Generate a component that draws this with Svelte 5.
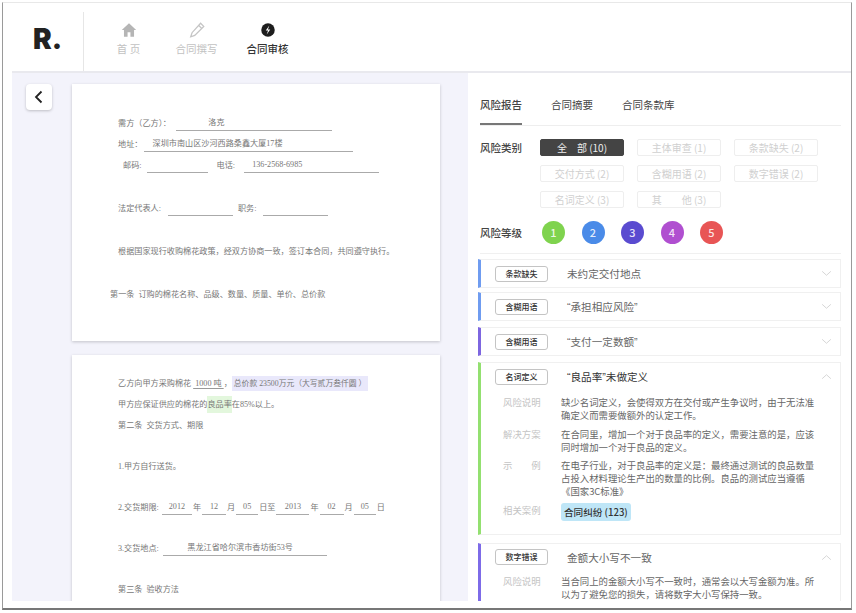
<script lang="ts">
  const nav = [
    { label: '首 页', icon: 'home' },
    { label: '合同撰写', icon: 'pen' },
    { label: '合同审核', icon: 'review', active: true }
  ];
  const chips = ['全　部 (10)', '主体审查 (1)', '条款缺失 (2)', '交付方式 (2)', '含糊用语 (2)', '数字错误 (2)', '名词定义 (3)', '其　　他 (3)'];
  const levels = ['#7fd34e', '#4a8be8', '#5a4bd0', '#b04fd0', '#e85555'];
  const collapsed = [
    { tag: '条款缺失', title: '未约定交付地点', color: '#6f9cf0' },
    { tag: '含糊用语', title: '“承担相应风险”', color: '#6f9cf0' },
    { tag: '含糊用语', title: '“支付一定数额”', color: '#7d66e0' }
  ];
</script>

<div class="frame">
  <header>
    <div class="logo">R.</div>
    <nav>
      {#each nav as item}
        <div class="nav-item" class:active={item.active}>
          <svg viewBox="0 0 20 20" width="18" height="18">
            {#if item.icon === 'home'}
              <path d="M10 2.5 2 10h2.4v7.5h4v-5h3.2v5h4V10H18z" fill="#b5b5b5" />
            {:else if item.icon === 'pen'}
              <path d="M14 2.5l3.5 3.5L7.5 16 3 17.5 4.5 13z M12 5l3.5 3.5" fill="none" stroke="#c4c4c4" stroke-width="1.4" />
            {:else}
              <circle cx="10" cy="10" r="7.5" fill="#1d1d1d" />
              <path d="M11.5 5 7.5 10.5h2.6L8.5 15l4-5.5H9.9z" fill="#fff" />
            {/if}
          </svg>
          <span>{item.label}</span>
        </div>
      {/each}
    </nav>
  </header>

  <main>
    <section class="docs">
      <button class="back" aria-label="返回">
        <svg viewBox="0 0 14 14" width="14" height="14"><path d="M9.5 1.5 4 7l5.5 5.5" fill="none" stroke="#222" stroke-width="1.8" /></svg>
      </button>
      <div class="pages">
        <article class="page first">
          <p>需方（乙方）： <u class="fill buyer">　　　　洛克</u></p>
          <p>地址： <u class="fill addr">　深圳市南山区沙河西路桑鑫大厦17楼</u></p>
          <p class="ind">邮码: <u class="fill zip"></u><span class="sp">电话:</span><u class="fill tel">　136-2568-6985</u></p>
          <p class="gap">法定代表人: <u class="fill rep"></u><span class="sp small">职务:</span><u class="fill rep"></u></p>
          <p class="gap">根据国家现行收购棉花政策，经双方协商一致，签订本合同，共同遵守执行。</p>
          <p class="gap out">第一条&nbsp; 订购的棉花名称、品级、数量、质量、单价、总价款</p>
        </article>
        <article class="page second">
          <p>乙方向甲方采购棉花 <u>&nbsp;1000&nbsp;吨&nbsp;</u>，<span class="hl-purple">总价款 23500万元（大写贰万叁仟圆 ）</span></p>
          <p>甲方应保证供应的棉花的<span class="hl-green">良品率</span>在85%以上。</p>
          <p>第二条&nbsp; 交货方式、期限</p>
          <p class="gap">1.甲方自行送货。</p>
          <p class="gap dates">2.交货期限: <u class="fill d30">2012</u>年<u class="fill d25">12</u>月<u class="fill d23">05</u>日至<u class="fill d34">2013</u>年<u class="fill d25">02</u>月<u class="fill d23">05</u>日</p>
          <p class="gap">3.交货地点: <u class="fill place">　　　黑龙江省哈尔滨市香坊街53号</u></p>
          <p class="gap">第三条&nbsp; 验收方法</p>
        </article>
      </div>
    </section>

    <aside class="report">
      <div class="tabs">
        <span class="tab active">风险报告</span>
        <span class="tab">合同摘要</span>
        <span class="tab">合同条款库</span>
      </div>
      <div class="filter">
        <b>风险类别</b>
        <div class="chips">
          {#each chips as chip, i}
            <span class="chip" class:on={i === 0}>{chip}</span>
          {/each}
        </div>
      </div>
      <div class="filter levels">
        <b>风险等级</b>
        <div class="dots">
          {#each levels as color, i}
            <span class="dot" style="background:{color}">{i + 1}</span>
          {/each}
        </div>
      </div>

      <div class="list">
        {#each collapsed as row}
          <div class="card" style="border-left-color:{row.color}">
            <div class="head">
              <span class="tag">{row.tag}</span>
              <span class="title">{row.title}</span>
              <svg class="chev" viewBox="0 0 12 8" width="11" height="7"><path d="M1 1.5 6 6l5-4.5" fill="none" stroke="#d4d4d4" stroke-width="1.1" /></svg>
            </div>
          </div>
        {/each}

        <div class="card open" style="border-left-color:#93e070">
          <div class="head">
            <span class="tag">名词定义</span>
            <span class="title dark">“良品率”未做定义</span>
            <svg class="chev" viewBox="0 0 12 8" width="11" height="7"><path d="M1 6.5 6 2l5 4.5" fill="none" stroke="#d4d4d4" stroke-width="1.1" /></svg>
          </div>
          <dl>
            <dt>风险说明</dt>
            <dd>缺少名词定义，会使得双方在交付或产生争议时，由于无法准<br />确定义而需要做额外的认定工作。</dd>
            <dt>解决方案</dt>
            <dd>在合同里，增加一个对于良品率的定义，需要注意的是，应该<br />同时增加一个对于良品的定义。</dd>
            <dt>示　　例</dt>
            <dd>在电子行业，对于良品率的定义是：最终通过测试的良品数量<br />占投入材料理论生产出的数量的比例。良品的测试应当遵循<br />《国家3C标准》</dd>
            <dt class="case">相关案例</dt>
            <dd class="case"><span class="pill">合同纠纷 (123)</span></dd>
          </dl>
        </div>

        <div class="card open last" style="border-left-color:#7d6be8">
          <div class="head">
            <span class="tag">数字错误</span>
            <span class="title">金额大小写不一致</span>
            <svg class="chev" viewBox="0 0 12 8" width="11" height="7"><path d="M1 6.5 6 2l5 4.5" fill="none" stroke="#d4d4d4" stroke-width="1.1" /></svg>
          </div>
          <dl>
            <dt>风险说明</dt>
            <dd>当合同上的金额大小写不一致时，通常会以大写金额为准。所<br />以为了避免您的损失，请将数字大小写保持一致。</dd>
          </dl>
        </div>
      </div>
    </aside>
  </main>
</div>

<style>
  :global(body) {
    background: #fff;
    font-family: "Noto Sans CJK SC", "Liberation Sans", sans-serif;
  }
  .frame {
    width: 850px;
    height: 608px;
    margin: 2px 0 0 2px;
    box-sizing: border-box;
    border: 1px solid #9a9a9a;
    border-top-color: #e8e8e8;
    border-bottom: 2px solid #777;
    background: #fff;
    display: flex;
    flex-direction: column;
    overflow: hidden;
  }
  header {
    height: 68px;
    flex: none;
    display: flex;
    align-items: stretch;
    margin-left: 9px;
  }
  .logo {
    width: 72px;
    margin-top: 9px;
    padding: 7px 0 0 21px;
    box-sizing: border-box;
    border-right: 1px solid #e6e6e6;
    font: 900 28px/40px "Inter", "Liberation Sans", sans-serif;
    color: #222;
  }
  nav {
    display: flex;
    padding-left: 23px;
    gap: 25px;
  }
  .nav-item {
    width: 43px;
    display: flex;
    flex-direction: column;
    align-items: center;
    padding-top: 18px;
    gap: 2px;
    font-size: 10.5px;
    line-height: 15px;
    color: #c2c2c2;
  }
  .nav-item.active { color: #333; font-weight: 500; margin-left: 3px; }
  main {
    flex: 1;
    min-height: 0;
    margin: 0 0 7px 9px;
    border-top: 2px solid #e9e9ee;
    display: flex;
    overflow: hidden;
  }
  .docs {
    width: 456px;
    flex: none;
    background: #f3f3fb;
    display: flex;
    padding: 11px 0 0 14px;
    box-sizing: border-box;
    gap: 20px;
    overflow: hidden;
  }
  .back {
    width: 26px;
    height: 26px;
    flex: none;
    padding: 0;
    display: flex;
    align-items: center;
    justify-content: center;
    border: none;
    border-radius: 4px;
    background: #fff;
    box-shadow: 0 1px 3px rgba(0, 0, 0, 0.22);
  }
  .pages {
    width: 368px;
    flex: none;
    display: flex;
    flex-direction: column;
    gap: 14px;
  }
  .page {
    background: #fff;
    box-shadow: 0 1px 3px rgba(0, 0, 0, 0.2);
    padding: 0 0 0 46px;
    box-sizing: border-box;
    font-family: "Liberation Serif", "Noto Sans CJK SC", serif;
    font-size: 8.15px;
    color: #777;
    flex: none;
  }
  .page.first { height: 257px; padding-top: 33px; }
  .page.second { height: 280px; padding-top: 22px; }
  .page p { margin: 0 0 7px; line-height: 14px; height: 14px; white-space: nowrap; }
  .page p.gap { margin-top: 27px; }
  .page.first p.gap { margin-top: 29px; }
  .page p.ind { padding-left: 5px; }
  .page p.out { margin-left: -8px; }
  .sp { margin: 0 9px; }
  .sp.small { margin: 0 2px 0 5px; }
  u { text-decoration-color: #999; text-underline-offset: 2px; }
  u.fill {
    display: inline-block;
    vertical-align: bottom;
    height: 13px;
    line-height: 12px;
    border-bottom: 1px solid #aaa;
    text-decoration: none;
  }
  u.buyer { width: 156px; margin-left: 3px; }
  u.addr { width: 209px; margin-left: 0; }
  u.zip { width: 61px; margin-left: 3px; }
  u.tel { width: 135px; }
  u.rep { width: 65px; margin-left: 5px; }
  u.place { width: 164px; margin-left: 2px; }
  .dates u.fill { text-align: center; margin: 0 1px; }
  u.d30 { width: 30px; }
  u.d25 { width: 24px; }
  u.d23 { width: 22px; }
  u.d34 { width: 33px; }
  .hl-purple { background: #e9e8fb; padding: 3px 2px; font-size: 7.8px; }
  .hl-green { background: #e3f7dd; padding: 4px 0; }
  .report {
    flex: 1;
    min-width: 0;
    padding: 0 10px;
    overflow: hidden;
  }
  .tabs {
    margin: 0 0 13px 2px;
    height: 53px;
    display: flex;
    gap: 29px;
    border-bottom: 1px solid #eeeeee;
    font-size: 10.5px;
    color: #444;
    box-sizing: border-box;
  }
  .tab {
    padding-top: 24px;
    height: 26px;
    line-height: 15px;
  }
  .tab.active {
    border-bottom: 2px solid #777;
    font-weight: 500;
  }
  .filter {
    display: flex;
    margin-left: 2px;
    font-size: 10.5px;
    color: #444;
  }
  .filter b { width: 60px; flex: none; line-height: 17px; font-weight: 500; }
  .chips {
    display: grid;
    grid-template-columns: repeat(3, 84px);
    column-gap: 13px;
    row-gap: 9px;
  }
  .chip {
    height: 17px;
    line-height: 15px;
    box-sizing: border-box;
    border: 1px solid #eeeeee;
    border-radius: 2px;
    text-align: center;
    font-size: 10px;
    color: #d0d0d0;
  }
  .chip.on {
    background: #444;
    border-color: #444;
    color: #eee;
  }
  .levels {
    margin-top: 13px;
    padding-bottom: 9px;
    border-bottom: 1px solid #f0f0f0;
    align-items: center;
  }
  .dots { display: flex; gap: 16.5px; margin-left: 2px; }
  .dot {
    width: 23px;
    height: 23px;
    border-radius: 50%;
    color: rgba(255, 255, 255, 0.85);
    font-size: 11px;
    font-weight: 500;
    line-height: 23px;
    text-align: center;
  }
  .list {
    margin-top: 5px;
    display: flex;
    flex-direction: column;
    gap: 4px;
  }
  .card {
    box-sizing: border-box;
    border: 1px solid #f0f0f0;
    border-left: 3px solid;
    background: #fff;
    flex: none;
  }
  .card:nth-child(3),
  .card:nth-child(4) { margin-top: 2px; }
  .card:nth-child(5) { margin-top: 4px; border-bottom: none; }
  .head {
    height: 27px;
    display: flex;
    align-items: center;
    padding-left: 14px;
  }
  .tag {
    width: 53px;
    height: 16px;
    line-height: 14px;
    box-sizing: border-box;
    border: 1px solid #c4c4c4;
    border-radius: 3px;
    text-align: center;
    font-size: 8px;
    font-weight: 500;
    color: #333;
  }
  .title {
    margin-left: 19px;
    font-family: "Liberation Sans", "Noto Sans CJK SC", sans-serif;
    font-size: 10.6px;
    color: #666;
  }
  .title.dark { color: #333; }
  .chev { margin-left: auto; margin-right: 8px; }
  dl {
    margin: 0;
    display: grid;
    grid-template-columns: 58px 1fr;
    padding: 6px 0 13px 22px;
    font-size: 9.4px;
    line-height: 13px;
    row-gap: 5.5px;
  }
  .last dl { padding-top: 4px; padding-bottom: 0; }
  dt { color: #c4c4c4; }
  dd { margin: 0; color: #666; white-space: nowrap; }
  dd.case { margin-top: -1px; }
  dt.case { line-height: 13px; }
  .pill {
    display: inline-block;
    height: 18px;
    line-height: 18px;
    padding: 0 3px;
    border-radius: 3px;
    background: #bfe6f7;
    color: #333;
    font-size: 9.6px;
    font-weight: 500;
  }
</style>
